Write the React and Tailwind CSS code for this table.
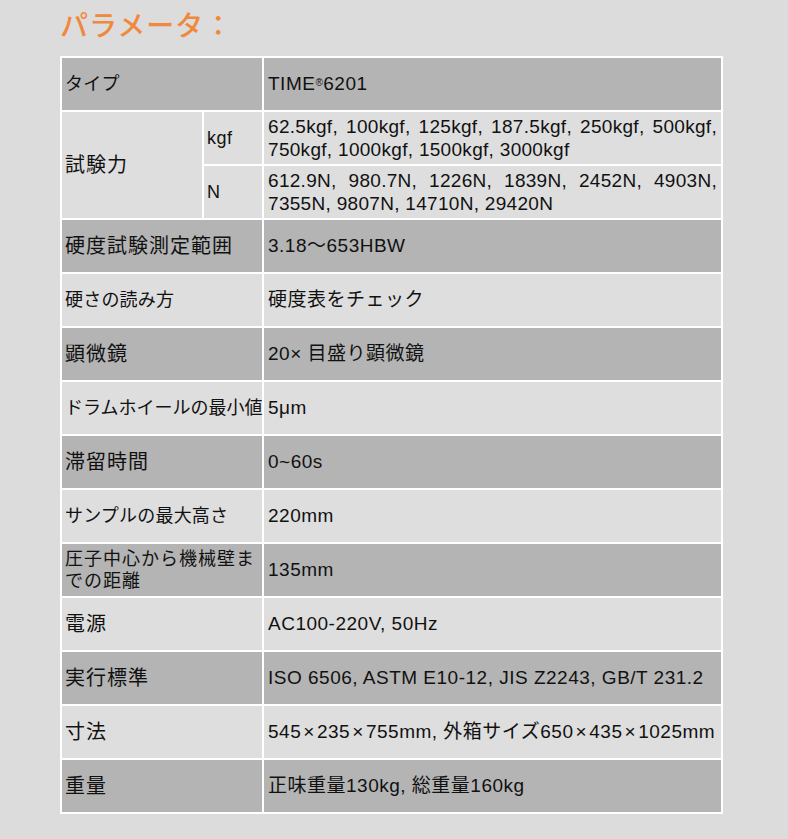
import React from "react";

const KANJI = "text-[20px] tracking-[1px]";
const KANA = "text-[18px] tracking-[0.2px]";

const rows = [
  { label: "タイプ", size: KANA, value: <>TIME<sup className="text-[10px] relative -top-[4px]">®</sup>6201</>, dark: true },
  { label: "試験力", split: true },
  { label: "硬度試験測定範囲", size: KANJI, value: "3.18～653HBW", dark: true },
  { label: "硬さの読み方", size: KANA, value: "硬度表をチェック" },
  { label: "顕微鏡", size: KANJI, value: "20× 目盛り顕微鏡", dark: true },
  { label: "ドラムホイールの最小値", size: "text-[18px] tracking-normal", value: "5μm" },
  { label: "滞留時間", size: KANJI, value: "0~60s", dark: true },
  { label: "サンプルの最大高さ", size: KANA, value: "220mm" },
  {
    label: <>圧子中心から機械壁ま<br />での距離</>,
    size: "text-[18px] tracking-[1px] leading-[22px]",
    value: "135mm",
    dark: true,
  },
  { label: "電源", size: KANJI, value: "AC100-220V, 50Hz" },
  { label: "実行標準", size: KANJI, value: "ISO 6506, ASTM E10-12, JIS Z2243, GB/T 231.2", dark: true },
  { label: "寸法", size: KANJI, value: "545\u200A×\u200A235\u200A×\u200A755mm, 外箱サイズ650\u200A×\u200A435\u200A×\u200A1025mm" },
  { label: "重量", size: KANJI, value: "正味重量130kg, 総重量160kg", dark: true },
];

const App = () => {
  return (
    <div
      className="min-h-[839px] bg-[#dcdcdc] pl-[60px] pt-[4px] text-[#111]"
      style={{ fontFamily: '"Liberation Sans", "Noto Sans CJK JP", sans-serif' }}
    >
      <h2
        className="h-[52px] text-[28px] font-medium leading-[40px] tracking-[1px] text-[#f0893c]"
        style={{ fontFamily: '"Noto Sans CJK JP", sans-serif' }}
      >
        パラメータ：
      </h2>
      <table className="w-[663px] table-fixed border-separate border-spacing-[2px] bg-white text-[19px] tracking-[0.5px]">
        <colgroup>
          <col className="w-[140px]" />
          <col className="w-[58px]" />
          <col />
        </colgroup>
        <tbody>
          {rows.map((r, i) =>
            r.split ? (
              <React.Fragment key={i}>
                <tr className="h-[52px] bg-[#dedede]">
                  <td rowSpan={2} className={`px-[3px] ${KANJI}`}>
                    {r.label}
                  </td>
                  <td className="px-[3px] text-[18px]">kgf</td>
                  <td className="px-[4px] text-justify leading-[23px] tracking-[0.3px]">
                    62.5kgf, 100kgf, 125kgf, 187.5kgf, 250kgf, 500kgf, 750kgf, 1000kgf, 1500kgf, 3000kgf
                  </td>
                </tr>
                <tr className="h-[52px] bg-[#dedede]">
                  <td className="px-[3px] text-[18px]">N</td>
                  <td className="px-[4px] text-justify leading-[23px] tracking-[0.3px]">
                    612.9N, 980.7N, 1226N, 1839N, 2452N, 4903N, 7355N, 9807N, 14710N, 29420N
                  </td>
                </tr>
              </React.Fragment>
            ) : (
              <tr key={i} className={`h-[52px] ${r.dark ? "bg-[#b4b4b4]" : "bg-[#dedede]"}`}>
                <td colSpan={2} className={`whitespace-nowrap px-[3px] ${r.size}`}>
                  {r.label}
                </td>
                <td className="whitespace-nowrap px-[4px]">{r.value}</td>
              </tr>
            )
          )}
        </tbody>
      </table>
    </div>
  );
};

export default App;
